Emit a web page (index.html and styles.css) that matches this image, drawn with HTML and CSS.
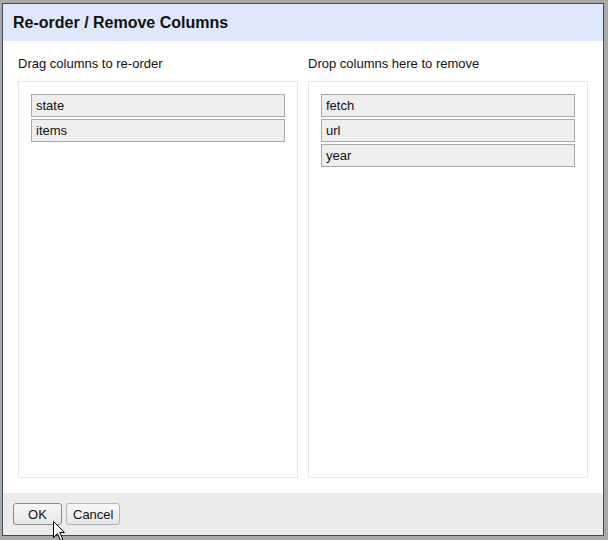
FILE: index.html
```html
<!DOCTYPE html>
<html>
<head>
<meta charset="utf-8">
<link rel="stylesheet" href="styles.css">
</head>
<body>
<div class="dialog">
  <div class="header">Re-order / Remove Columns</div>
  <div class="body">
    <div class="col">
      <div class="label">Drag columns to re-order</div>
      <div class="box">
        <div class="item">state</div>
        <div class="item">items</div>
      </div>
    </div>
    <div class="col">
      <div class="label">Drop columns here to remove</div>
      <div class="box">
        <div class="item">fetch</div>
        <div class="item">url</div>
        <div class="item">year</div>
      </div>
    </div>
  </div>
  <div class="footer">
    <button class="btn btn-ok">OK</button>
    <button class="btn">Cancel</button>
  </div>
</div>
<svg class="cursor" width="13" height="21" viewBox="0 0 13 21">
  <path d="M0.5 0.5 L0.5 16.5 L4.5 12.5 L7.5 19.5 L9.8 18.5 L6.8 11.5 L11.5 11.5 Z" fill="#fff" stroke="#000" stroke-width="1" stroke-linejoin="miter"/>
</svg>
</body>
</html>
```
FILE: styles.css
```css
html, body {
  margin: 0;
  padding: 0;
}
body {
  width: 608px;
  height: 540px;
  overflow: hidden;
  background: #a9a9a9;
  font-family: "Liberation Sans", Arial, sans-serif;
  padding: 3px 0 0 2px;
  box-sizing: border-box;
  position: relative;
}
.dialog {
  position: relative;
  width: 600px;
  border: 1px solid #3e4b5b;
  background: #fff;
}
.header {
  height: 37px;
  line-height: 37px;
  background: #dde9fb;
  padding-left: 10px;
  font-size: 16px;
  font-weight: bold;
  color: #111;
}
.body {
  display: grid;
  grid-template-columns: 280px 280px;
  column-gap: 10px;
  padding: 15px;
  background: #fff;
}
.label {
  font-size: 13px;
  line-height: 16px;
  color: #111;
  margin-bottom: 9px;
}
.box {
  height: 371px;
  border: 1px solid #e8e8e8;
  padding: 12px;
}
.item {
  height: 21px;
  line-height: 21px;
  border: 1px solid #aaa;
  background: #eee;
  padding-left: 4px;
  font-size: 13px;
  color: #111;
  margin-bottom: 2px;
}
.footer {
  height: 42px;
  box-sizing: border-box;
  background: #ececec;
  padding: 10px 10px;
  display: flex;
  gap: 4px;
  align-items: flex-start;
}
.btn {
  height: 22px;
  margin: 0;
  padding: 0 6px;
  font-family: "Liberation Sans", Arial, sans-serif;
  font-size: 13px;
  color: #111;
  border: 1px solid #b4b4b4;
  border-radius: 3px;
  background: linear-gradient(#f8f8f8, #e6e6e6);
}
.btn-ok {
  min-width: 49px;
  border-color: #8a8a8a;
}
.cursor {
  position: absolute;
  left: 53px;
  top: 521px;
}
```
